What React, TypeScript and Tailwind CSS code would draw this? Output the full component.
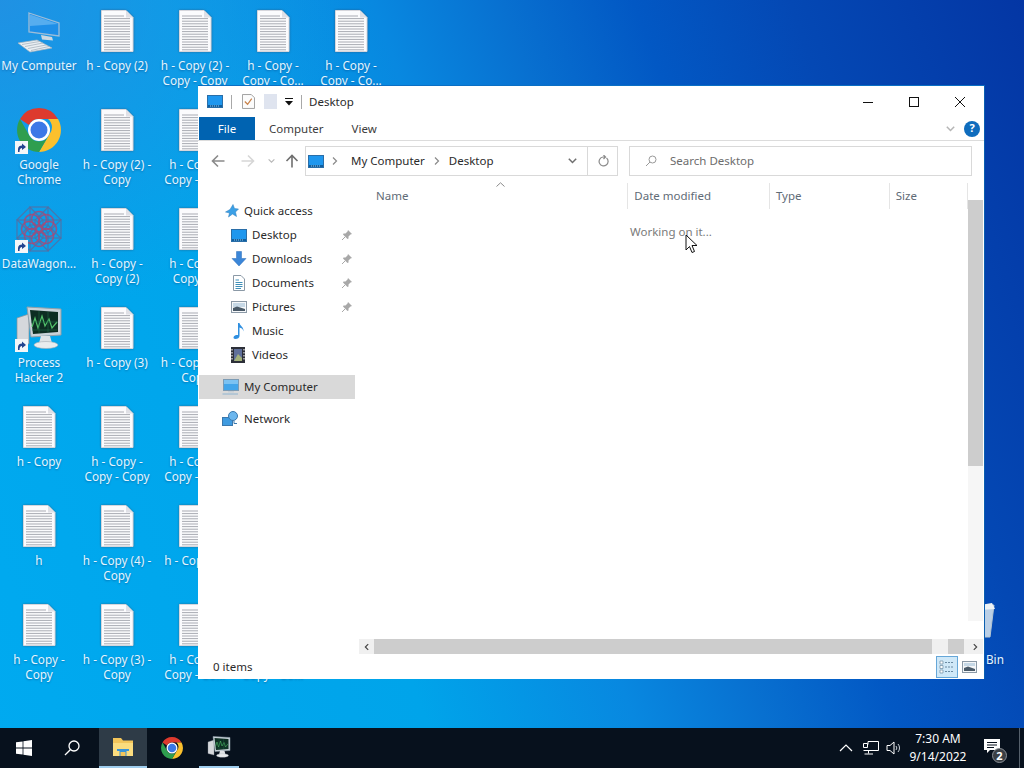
import React from "react";

const F = "font-['Noto_Sans','Open_Sans',sans-serif]";

function Doc() {
  return (
    <svg width="48" height="48" viewBox="0 0 48 48" className="drop-shadow-[0_0_1px_rgba(60,60,80,0.5)]">
      <path d="M8.500 3.500H33L40 10.500V44.500H8.500Z" fill="#fbfbfd" stroke="#d6d6dc" />
      <path d="M33 3.500V10.500H40Z" fill="#dfe0e6" />
      {Array.from({ length: 14 }).map((_, i) => (
        <rect key={i} x="11" y={8.5 + i * 2.6} width={i === 0 ? 20 : 26} height="1" fill="#a9abb3" />
      ))}
    </svg>
  );
}

function Shortcut() {
  return (
    <svg width="13" height="13" viewBox="0 0 13 13" className="absolute left-[15px] top-[42px]">
      <rect width="13" height="13" fill="#f4f6f8" />
      <path d="M3 11V8C3 5.500 5 4.500 7 4.500V2.500L11 6L7 9V7C5.500 7 4.500 8 4.500 11Z" fill="#23448f" />
    </svg>
  );
}

function BigComputer() {
  return (
    <svg width="48" height="48" viewBox="0 0 48 48">
      <path d="M14 6L44 16V29L14 25Z" fill="#1e8fe8" stroke="#9dbdd8" strokeWidth="1.300" />
      <path d="M15 7.500L43 17L15 19Z" fill="#56adef" />
      <path d="M26 28L37 30L38 33.500L27 32.500Z" fill="#cfd8e0" />
      <path d="M3 36L22 33L37 41L15 45Z" fill="#eaeff3" stroke="#a8b4be" strokeWidth="0.700" />
      <path d="M7 37.500L24.500 34.500M10 39.500L28 36M13 41.500L31 38M16 43.500L34 39.500" stroke="#a8b4be" strokeWidth="0.800" />
    </svg>
  );
}

function ChromeIcon({ size }: { size: number }) {
  const c = 24;
  return (
    <svg width={size} height={size} viewBox="0 0 48 48">
      <path d="M24 2A22 22 0 0 1 43 13H24A11 11 0 0 0 14 19L5 13A22 22 0 0 1 24 2Z" fill="#dd3a2e" />
      <path d="M43 13A22 22 0 0 1 24 46L34 29A11 11 0 0 0 33 13Z" fill="#fbc02d" />
      <path d="M5 13A22 22 0 0 0 24 46L34 29A11 11 0 0 1 14 29Z" fill="#2f9e4f" />
      <circle cx={c} cy={c} r="11" fill="#fff" />
      <circle cx={c} cy={c} r="8.500" fill="#3b78e7" />
    </svg>
  );
}

function WagonIcon() {
  const rings = [0, 45, 90, 135, 180, 225, 270, 315];
  return (
    <svg width="48" height="48" viewBox="0 0 48 48">
      {rings.map((r) => (
        <g key={r} transform={`rotate(${r} 24 24)`} fill="none">
          <rect x="15" y="2" width="18" height="18" stroke="#5a6a9e" strokeOpacity="0.800" strokeWidth="1.200" />
          <circle cx="24" cy="14" r="7.500" stroke="#a64a78" strokeOpacity="0.850" strokeWidth="1.500" />
        </g>
      ))}
    </svg>
  );
}

function HackerIcon({ size }: { size: number }) {
  return (
    <svg width={size} height={size} viewBox="0 0 48 48">
      <path d="M2 14L14 10V40L2 37Z" fill="#d5d8dc" stroke="#8b9299" strokeWidth="0.700" />
      <path d="M12 3L46 5V31L16 33Z" fill="#c9d2d8" stroke="#8fa0aa" />
      <path d="M15 6L43 8V28L18 30Z" fill="#0d2d22" />
      <path d="M17 23L20 14L23 24L27 12L30 22L34 15L37 24L42 18" fill="none" stroke="#52c06a" strokeWidth="1.200" />
      <path d="M17 26H42M16 18H43M24 7V29M33 8V28" stroke="#1f6a48" strokeWidth="0.600" />
      <path d="M26 32H35L37 39H24Z" fill="#dfe3e6" />
      <ellipse cx="31" cy="41" rx="12" ry="3.500" fill="#e9ecee" stroke="#a6adb3" strokeWidth="0.600" />
    </svg>
  );
}

function RecycleIcon() {
  return (
    <svg width="48" height="48" viewBox="0 0 48 48">
      <path d="M13 8L45 4L41 36H19Z" fill="#dbe6ee" fillOpacity="0.850" stroke="#b5c6d2" />
      <path d="M19 6L43 2L46 8L15 10Z" fill="#eef3f6" />
    </svg>
  );
}

type Item = { lines: string[]; icon?: React.ReactNode; link?: boolean };

const d = (...lines: string[]): Item => ({ lines });

const items: (Item | null)[] = [
  { lines: ["My Computer"], icon: <BigComputer /> },
  { lines: ["Google", "Chrome"], icon: <ChromeIcon size={48} />, link: true },
  { lines: ["DataWagon..."], icon: <WagonIcon />, link: true },
  { lines: ["Process", "Hacker 2"], icon: <HackerIcon size={48} />, link: true },
  d("h - Copy"),
  d("h"),
  d("h - Copy -", "Copy"),
  d("h - Copy (2)"),
  d("h - Copy (2) -", "Copy"),
  d("h - Copy -", "Copy (2)"),
  d("h - Copy (3)"),
  d("h - Copy -", "Copy - Copy"),
  d("h - Copy (4) -", "Copy"),
  d("h - Copy (3) -", "Copy"),
  d("h - Copy (2) -", "Copy - Copy"),
  d("h - Copy -", "Copy - Co..."),
  d("h - Copy -", "Copy (3)"),
  d("h - Copy (3) -", "Copy"),
  d("h - Copy -", "Copy - Co..."),
  d("h - Copy (4)"),
  d("h - Copy -", "Copy - Co..."),
  d("h - Copy -", "Copy - Co..."),
  null, null, null, null, null,
  d("h - Copy -", "Copy - Co..."),
  d("h - Copy -", "Copy - Co..."),
];

function DesktopItem({ item }: { item: Item }) {
  return (
    <div className="relative flex flex-col items-center pt-[7px]">
      <div className="flex h-[48px] w-[48px] items-center justify-center">{item.icon ?? <Doc />}</div>
      <div className="mt-[3px] w-[78px] whitespace-nowrap text-center text-[11.75px] leading-[15px] text-[#e4f5ff] [text-shadow:0_1px_2px_rgba(0,30,80,0.35)]">
        {item.lines.map((l) => (
          <div key={l}>{l}</div>
        ))}
      </div>
      {item.link ? <Shortcut /> : null}
    </div>
  );
}

function SmallMonitor({ className = "" }: { className?: string }) {
  return (
    <svg width="16" height="13" viewBox="0 0 16 13" className={className}>
      <rect x="0.500" y="0.500" width="15" height="12" fill="#1f97ee" stroke="#2a6ea8" />
      <rect x="1" y="10" width="14" height="2" fill="#0f5f9f" />
      <path d="M3 11H13" stroke="#bfe0f5" strokeDasharray="1 1" strokeWidth="0.800" />
    </svg>
  );
}

function Pin() {
  return (
    <svg width="12" height="12" viewBox="0 0 12 12">
      <path d="M7 1L11 5L9.500 5.500L7.500 7.500L7.500 9.500L6.500 10L2 5.500L2.500 4.500L4.500 4.500L6.500 2.500Z" fill="#a8a8a8" />
      <path d="M4 8L1 11" stroke="#a8a8a8" />
    </svg>
  );
}

function NavIcon({ kind }: { kind: string }) {
  if (kind === "Desktop") return <SmallMonitor />;
  if (kind === "Downloads")
    return (
      <svg width="16" height="16" viewBox="0 0 16 16">
        <path d="M5.500 0.500H10.500V7.500H15L8 15L1 7.500H5.500Z" fill="#3b86d8" stroke="#2a6db8" strokeWidth="0.500" />
      </svg>
    );
  if (kind === "Documents")
    return (
      <svg width="16" height="16" viewBox="0 0 16 16">
        <path d="M2.500 0.500H10L13.500 4V15.500H2.500Z" fill="#fff" stroke="#8b99a6" />
        <path d="M4.500 5H8M4.500 7.500H11.500M4.500 9.500H11.500M4.500 11.500H11.500M4.500 13.500H10" stroke="#3f8fb8" />
      </svg>
    );
  if (kind === "Pictures")
    return (
      <svg width="16" height="14" viewBox="0 0 16 14">
        <rect x="0.500" y="1.500" width="15" height="11" fill="#f6f8fa" stroke="#8b99a6" />
        <rect x="2" y="3" width="12" height="4" fill="#c6d8e6" />
        <path d="M2 11V8L6 6.500L14 9V11Z" fill="#4a5a68" />
      </svg>
    );
  if (kind === "Music")
    return (
      <svg width="16" height="18" viewBox="0 0 16 18">
        <path d="M7 1H8.500C9 4 13 5 12.500 9.500C12 6.500 10 6 8.500 5.500V14C8.500 16 6.500 17 4.500 17C2.500 17 2 15.500 3 14.200C4 13 6 12.700 7 13Z" fill="#2f8fe0" />
      </svg>
    );
  if (kind === "Videos")
    return (
      <svg width="14" height="16" viewBox="0 0 14 16">
        <rect width="14" height="16" fill="#2c2f38" />
        <rect x="3" y="2" width="8" height="12" fill="#5f6f9a" />
        <path d="M3 14L7 7L11 11V14Z" fill="#a2b07a" />
        <path d="M1 2V14M13 2V14" stroke="#e8e8e8" strokeDasharray="1.500 1.500" strokeWidth="1.200" />
      </svg>
    );
  return null;
}

function PcIcon() {
  return (
    <svg width="17" height="16" viewBox="0 0 17 16">
      <rect x="1.500" y="0.500" width="15" height="11" fill="#43a5ea" stroke="#7c9bb4" />
      <rect x="2" y="1" width="14" height="4" fill="#7cc2f2" />
      <path d="M6 12H12V13.500H6Z" fill="#c5ced6" />
      <path d="M0.500 15H16" stroke="#8fb4d0" />
    </svg>
  );
}

function NetIcon() {
  return (
    <svg width="17" height="16" viewBox="0 0 17 16">
      <rect x="0.500" y="6.500" width="10" height="8" fill="#3f9be0" stroke="#3a78ad" />
      <circle cx="11" cy="5" r="4.500" fill="#6cb7ee" stroke="#3a78ad" />
      <path d="M12 10V12.500H15" stroke="#3a78ad" fill="none" />
    </svg>
  );
}

function Star() {
  return (
    <svg width="14" height="14" viewBox="0 0 14 14">
      <path d="M8 0.500L9.500 4.500L13.500 5L10.500 8L11.500 12.500L7.500 10L3.500 13L4.500 9L0.500 8L5 5.500Z" fill="#3ba0e6" stroke="#2c7cbd" strokeWidth="0.500" />
    </svg>
  );
}

function NavRow({ label, pin }: { label: string; pin?: boolean }) {
  return (
    <div className="flex h-[24px] items-center pl-[32px] text-[11.5px]">
      <span className="flex w-[21px] shrink-0 items-center justify-start"><NavIcon kind={label} /></span>
      <span>{label}</span>
      {pin ? <span className="ml-auto mr-[2px] flex"><Pin /></span> : null}
    </div>
  );
}

function Arrow({ dir, color }: { dir: "left" | "right" | "up"; color: string }) {
  const r = dir === "left" ? 0 : dir === "right" ? 180 : 90;
  return (
    <svg width="14" height="14" viewBox="0 0 14 14" style={{ transform: `rotate(${r}deg)` }}>
      <path d="M7 1.500L1.500 7L7 12.500M1.500 7H13.500" fill="none" stroke={color} strokeWidth="1.600" />
    </svg>
  );
}

function Chev({ color = "#6f6f6f", w = 9 }: { color?: string; w?: number }) {
  return (
    <svg width={w} height="6" viewBox="0 0 9 6">
      <path d="M0.800 0.800L4.500 4.500L8.200 0.800" fill="none" stroke={color} strokeWidth="1.500" />
    </svg>
  );
}

function Crumb() {
  return (
    <svg width="6" height="8" viewBox="0 0 6 8">
      <path d="M1 0.500L4.500 4L1 7.500" fill="none" stroke="#8a8a8a" strokeWidth="1.200" />
    </svg>
  );
}

function ExplorerWindow() {
  return (
    <div className="absolute left-[198px] top-[85px] z-10 flex h-[594px] w-[787px] flex-col border-t border-r border-t-[#0a6fc4] border-r-[#0b5fb0] bg-white text-[#2a2a2a]">
      {/* title bar */}
      <div className="flex h-[31px] shrink-0 items-center pl-[9px]">
        <SmallMonitor />
        <span className="ml-[8px] h-[14px] w-px bg-[#a8a8a8]" />
        <svg width="13" height="15" viewBox="0 0 14 16" className="ml-[10px]">
          <path d="M0.500 0.500H10L13.500 4V15.500H0.500Z" fill="#fcfcfc" stroke="#9a9a9a" />
          <path d="M3 8L6 11L10.500 5" fill="none" stroke="#c8824a" strokeWidth="1.300" />
        </svg>
        <span className="ml-[9px] h-[15px] w-[13px] bg-[#dfe4ef]" />
        <svg width="8" height="8" viewBox="0 0 8 8" className="ml-[8px]">
          <path d="M0 0H8V1H0ZM0 3H8L4 7.500Z" fill="#111" />
        </svg>
        <span className="ml-[8px] h-[14px] w-px bg-[#a8a8a8]" />
        <span className="ml-[7px] text-[11.5px]">Desktop</span>
        <div className="ml-auto flex items-center">
          <svg width="12" height="12" viewBox="0 0 12 12"><path d="M1 6.500H11" stroke="#111" /></svg>
          <svg width="12" height="12" viewBox="0 0 12 12" className="ml-[34px]"><rect x="1.500" y="1.500" width="9" height="9" fill="none" stroke="#111" /></svg>
          <svg width="12" height="12" viewBox="0 0 12 12" className="ml-[34px] mr-[18px]"><path d="M1 1L11 11M11 1L1 11" stroke="#111" /></svg>
        </div>
      </div>
      {/* ribbon tabs */}
      <div className="flex h-[24px] shrink-0 items-stretch border-b border-[#dcdcdc] pl-px text-[11.5px]">
        <span className="flex w-[56px] items-center justify-center bg-[#0063b1] text-white">File</span>
        <span className="ml-[14px] flex items-center text-[#3c3c3c]">Computer</span>
        <span className="ml-[28px] flex items-center text-[#3c3c3c]">View</span>
        <div className="ml-auto flex items-center gap-[9px] pr-[4px]">
          <Chev color="#b5b5b5" w={9} />
          <span className="flex h-[16px] w-[16px] items-center justify-center rounded-full bg-[#0f6cbd] text-[11px] font-bold text-white">?</span>
        </div>
      </div>
      {/* address row */}
      <div className="flex h-[40px] shrink-0 items-center pl-[13px] pr-[12px]">
        <span className="flex w-[14px]"><Arrow dir="left" color="#8a8a8a" /></span>
        <span className="ml-[16px] flex w-[14px]"><Arrow dir="right" color="#d6d6d6" /></span>
        <span className="ml-[13px] flex"><Chev color="#b8b8b8" w={7} /></span>
        <span className="ml-[10px] flex w-[14px]"><Arrow dir="up" color="#6f6f6f" /></span>
        <div className="ml-[6px] flex h-[30px] w-[313px] items-center border border-[#d9d9d9] pl-[2px] text-[11.5px]">
          <SmallMonitor />
          <span className="ml-[8px] flex"><Crumb /></span>
          <span className="ml-[13px]">My Computer</span>
          <span className="ml-[9px] flex"><Crumb /></span>
          <span className="ml-[9px]">Desktop</span>
          <span className="ml-auto mr-[10px] flex"><Chev color="#6f6f6f" /></span>
          <span className="flex h-full w-[30px] items-center justify-center border-l border-[#d9d9d9]">
            <svg width="12" height="13" viewBox="0 0 12 13"><path d="M9.500 3A4.500 4.500 0 1 1 6 2H8M6.500 0L8.500 2L6.500 4" fill="none" stroke="#8a8a8a" strokeWidth="1.200" /></svg>
          </span>
        </div>
        <div className="ml-[11px] flex h-[30px] flex-1 items-center border border-[#d9d9d9] pl-[15px] text-[11.5px] text-[#6d6d6d]">
          <svg width="12" height="12" viewBox="0 0 12 12"><circle cx="7.500" cy="4.500" r="3.500" fill="none" stroke="#9a9a9a" /><path d="M5 7L1 11" stroke="#9a9a9a" /></svg>
          <span className="ml-[13px]">Search Desktop</span>
        </div>
      </div>
      {/* body */}
      <div className="flex min-h-0 flex-1">
        <nav className="w-[157px] shrink-0 pl-px pt-[18px] text-[#2a2a2a]">
          <div className="flex h-[24px] items-center pl-[26px] text-[11.5px]">
            <span className="flex w-[19px]"><Star /></span>Quick access
          </div>
          <NavRow label="Desktop" pin />
          <NavRow label="Downloads" pin />
          <NavRow label="Documents" pin />
          <NavRow label="Pictures" pin />
          <NavRow label="Music" />
          <NavRow label="Videos" />
          <div className="mt-[8px] flex h-[24px] items-center bg-[#d9d9d9] pl-[23px] text-[11.5px]">
            <span className="flex w-[22px]"><PcIcon /></span>My Computer
          </div>
          <div className="mt-[8px] flex h-[24px] items-center pl-[23px] text-[11.5px]">
            <span className="flex w-[22px]"><NetIcon /></span>Network
          </div>
        </nav>
        <div className="flex min-w-0 flex-1 flex-col">
          <div className="flex min-h-0 flex-1">
            <div className="relative min-w-0 flex-1 text-[11.5px] text-[#5f6b76]">
              <div className="flex h-[30px] items-center">
                <span className="ml-[20px] w-[255px] pl-px">Name</span>
                <span className="flex h-[26px] w-[143px] items-center border-l border-[#e5e5e5] pl-[6px]">Date modified</span>
                <span className="flex h-[26px] w-[121px] items-center border-l border-[#e5e5e5] pl-[6px]">Type</span>
                <span className="flex h-[26px] w-[80px] items-center border-r border-l border-[#e5e5e5] pl-[6px]">Size</span>
              </div>
              <svg width="9" height="5" viewBox="0 0 9 5" className="absolute left-[141px] top-[1px]">
                <path d="M0.500 4.500L4.500 0.800L8.500 4.500" fill="none" stroke="#8a8a8a" />
              </svg>
              <div className="ml-[275px] mt-[12px] text-[#7a7a7a]">Working on it...</div>
            </div>
            <div className="mr-px flex w-[15px] shrink-0 flex-col pt-[19px]">
              <div className="h-[266px] bg-[#cdcdcd]" />
              <div className="h-[155px] bg-[#f6f6f6]" />
            </div>
          </div>
          <div className="mb-[1px] ml-[4px] mr-px flex h-[15px] shrink-0 items-center bg-[#f0f0f0]">
            <span className="flex w-[15px] items-center justify-center"><span className="rotate-90"><Chev color="#444" w={7} /></span></span>
            <div className="h-full w-[558px] bg-[#cdcdcd]" />
            <div className="ml-[16px] h-full w-[16px] bg-[#cdcdcd]" />
            <span className="ml-auto flex w-[15px] items-center justify-center"><span className="-rotate-90"><Chev color="#444" w={7} /></span></span>
          </div>
        </div>
      </div>
      {/* status bar */}
      <div className="flex h-[24px] shrink-0 items-center pl-[15px] pr-[7px] text-[11.5px]">
        <span>0 items</span>
        <div className="ml-auto flex items-center gap-[3px]">
          <span className="flex h-[22px] w-[22px] items-center justify-center border border-[#66a7d8] bg-[#cfe8f8]">
            <svg width="16" height="14" viewBox="0 0 16 14"><path d="M1 1H4V4H1ZM1 5.500H4V8.500H1ZM1 10H4V13H1Z" fill="#fff" stroke="#6a8aa2" strokeWidth="0.700" /><path d="M6 2.500H15M6 7H15M6 11.500H15" stroke="#6a8aa2" strokeDasharray="2 1" /></svg>
          </span>
          <span className="flex h-[22px] w-[16px] items-center justify-center">
            <svg width="15" height="12" viewBox="0 0 15 12"><rect x="0.500" y="0.500" width="14" height="11" fill="#f4f6f8" stroke="#8b99a6" /><rect x="2" y="2" width="11" height="3" fill="#c6d8e6" /><path d="M2 10V7L6 5.500L13 8V10Z" fill="#4a5a68" /></svg>
          </span>
        </div>
      </div>
    </div>
  );
}

function Taskbar() {
  return (
    <footer className="flex h-[40px] shrink-0 items-center bg-[#07111d] text-white">
      <span className="ml-[16px] flex">
        <svg width="16" height="16" viewBox="0 0 16 16" fill="#fff">
          <path d="M0 2.300L6.600 1.400V7.600H0ZM7.400 1.300L16 0V7.600H7.400ZM0 8.400H6.600V14.600L0 13.700ZM7.400 8.400H16V16L7.400 14.700Z" />
        </svg>
      </span>
      <span className="ml-[32px] flex">
        <svg width="16" height="16" viewBox="0 0 16 16" fill="none" stroke="#fff" strokeWidth="1.300">
          <circle cx="10" cy="6" r="5" />
          <path d="M6.300 9.700L1 15" />
        </svg>
      </span>
      <span className="ml-[19px] flex h-full w-[48px] items-center justify-center border-b-2 border-[#9fcdee] bg-[#2e3b47]">
        <svg width="22" height="20" viewBox="0 0 22 20">
          <path d="M1 1H9L11 3.500H21V19H1Z" fill="#f3c55a" />
          <path d="M1 6H21V19H1Z" fill="#fbdc7e" />
          <path d="M5 12H17V14H14.500V19H7.500V14H5Z" fill="#3a93d6" />
          <rect x="8.500" y="15" width="5" height="4" fill="#f3c55a" />
        </svg>
      </span>
      <span className="ml-[13px] flex"><ChromeIcon size={24} /></span>
      <span className="ml-[15px] flex h-full w-[40px] items-center justify-center border-b-2 border-[#9fcdee]"><HackerIcon size={24} /></span>
      <div className="ml-auto flex h-full items-center">
        <svg width="14" height="8" viewBox="0 0 14 8" fill="none" stroke="#fff" strokeWidth="1.200"><path d="M1 7L7 1L13 7" /></svg>
        <svg width="16" height="14" viewBox="0 0 16 14" fill="none" stroke="#fff" className="ml-[10px]">
          <path d="M5 3.500V0.500H15.500V9.500H0.500" /><path d="M0.500 2.500H4.500V6.500H0.500ZM5.500 9.500V12.500M1.500 13H10" />
        </svg>
        <svg width="16" height="14" viewBox="0 0 16 14" fill="none" stroke="#fff" className="ml-[7px]">
          <path d="M1 4.500H4L8 1V13L4 9.500H1Z" /><path d="M10 5A3 3 0 0 1 10 9M12 3A6 6 0 0 1 12 11" stroke="#c9d0d6" />
        </svg>
        <div className="ml-[1px] w-[70px] text-center text-[12px] leading-[18px]">
          <div>7:30 AM</div>
          <div>9/14/2022</div>
        </div>
        <span className="relative ml-[8px] flex h-full w-[24px] items-center justify-center">
          <svg width="16" height="14" viewBox="0 0 16 14" className="absolute left-[3px] top-[11px]">
            <path d="M0 0H16V11H6L3 14V11H0Z" fill="#fff" />
            <path d="M3 3.500H13M3 6H13M3 8.500H10" stroke="#07111d" />
          </svg>
          <span className="absolute left-[11px] top-[20px] flex h-[15px] w-[15px] items-center justify-center rounded-full border border-[#8a9096] bg-[#3a3f45] text-[11px] font-bold leading-none">2</span>
        </span>
        <span className="ml-[14px] mr-[4px] h-full w-px bg-[#55606b]" />
      </div>
    </footer>
  );
}

export default function App() {
  return (
    <div className={`flex h-[768px] w-[1024px] flex-col overflow-hidden ${F} bg-[radial-gradient(360px_320px_at_0%_0%,rgba(40,140,225,0.8),rgba(40,140,225,0)),linear-gradient(70deg,#00aaf0_0%,#00a4ea_34%,#0888e0_50%,#0870d0_60%,#0258c4_70%,#0448b4_82%,#0436a4_100%)]`}>
      <main className="relative min-h-0 flex-1">
        <div className="grid grid-flow-col grid-cols-[repeat(5,78px)] grid-rows-[repeat(7,99px)]">
          {items.map((it, i) => (it ? <DesktopItem key={i} item={it} /> : <div key={i} />))}
        </div>
        <div className="absolute left-[937px] top-[594px] w-[72px]">
          <DesktopItem item={{ lines: ["Recycle Bin"], icon: <RecycleIcon /> }} />
        </div>
        <ExplorerWindow />
        <svg width="14" height="20" viewBox="0 0 14 20" className="absolute left-[685px] top-[234px] z-20">
          <path d="M1 1V16L4.500 12.500L7 18.500L9.500 17.500L7 11.500H12Z" fill="#fff" stroke="#111" />
        </svg>
      </main>
      <Taskbar />
    </div>
  );
}
